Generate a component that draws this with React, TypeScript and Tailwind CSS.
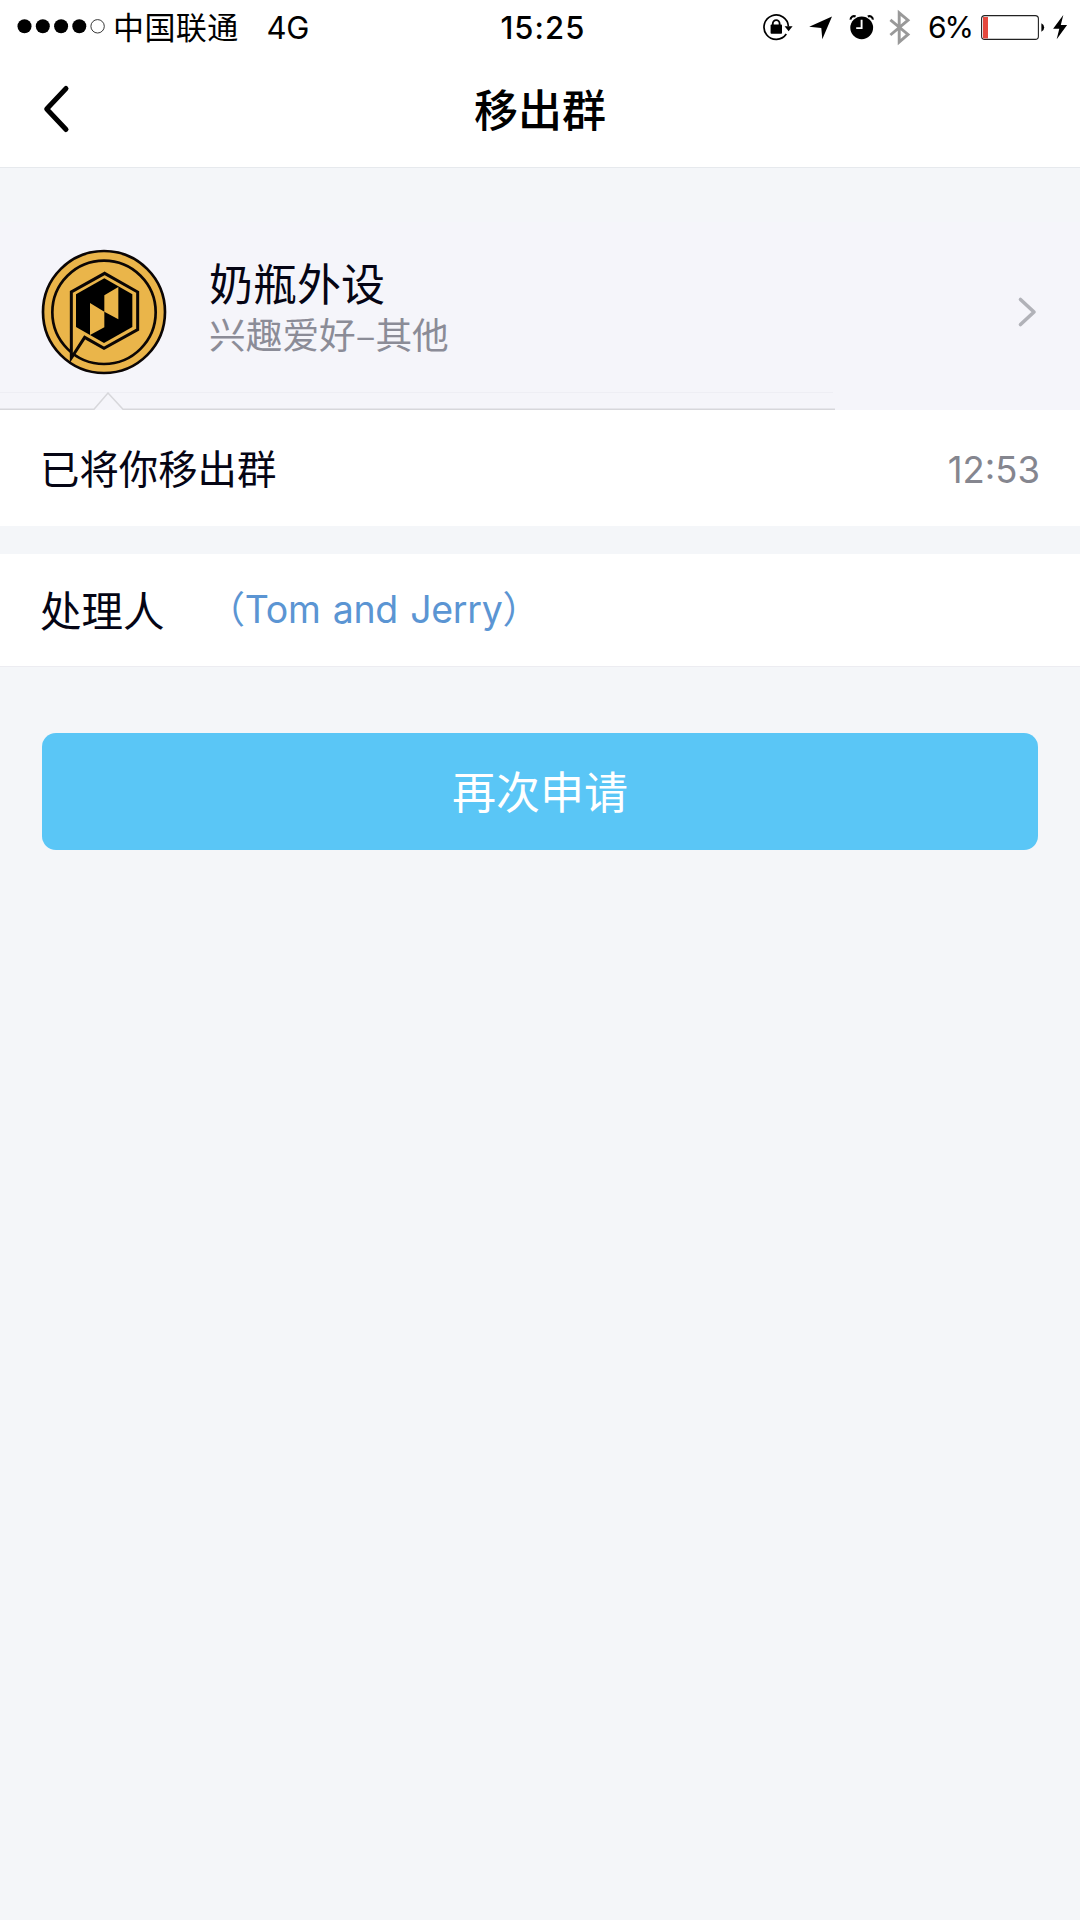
const latin = 'font-[Inter,"Noto_Sans_CJK_SC",sans-serif]';
const cjk = 'font-["Noto_Sans_CJK_SC",sans-serif]';

function SignalDots() {
  return (
    <svg width="90" height="16" viewBox="0 0 90 16">
      <circle cx="7.5" cy="7.3" r="7" />
      <circle cx="25.8" cy="7.3" r="7" />
      <circle cx="44.1" cy="7.3" r="7" />
      <circle cx="62.3" cy="7.3" r="7" />
      <circle cx="80.6" cy="7.3" r="6.7" fill="none" stroke="#222" strokeWidth="0.9" />
    </svg>
  );
}

function StatusIcons() {
  return (
    <svg width="150" height="40" viewBox="762 6 150 40">
      {/* rotation lock */}
      <path d="M788.4 25.5A12.2 12.2 0 1 0 786.3 33" fill="none" stroke="#000" strokeWidth="1.7" />
      <path d="M784.6 25.3h8l-4 4.9z" />
      <rect x="770.6" y="23.6" width="11.4" height="9.2" rx="0.8" />
      <path d="M772.8 24.4v-1.9a3.4 3.4 0 0 1 6.8 0v1.9" fill="none" stroke="#000" strokeWidth="1.8" />
      {/* location */}
      <path d="M832 15.6L822.3 38.3 821.3 27 809.2 25.8z" />
      {/* alarm */}
      <circle cx="861.7" cy="26.8" r="11.4" />
      <path d="M850.6 18.6a3.4 3.4 0 0 1 5-3.1M872.8 18.6a3.4 3.4 0 0 0-5-3.1" fill="none" stroke="#000" strokeWidth="2.2" />
      <path d="M861.6 18.8v8.3h-5.4" fill="none" stroke="#fff" strokeWidth="1.9" />
      {/* bluetooth */}
      <path d="M890.4 18.8L908 33.4 899.2 41V11.8L908 19.2 890.4 34" fill="none" stroke="#999" strokeWidth="2.9" />
    </svg>
  );
}

function Battery() {
  return (
    <svg width="90" height="30" viewBox="980 11 90 30">
      <rect x="981.6" y="14.6" width="56.8" height="23.8" rx="3.2" fill="#fff" stroke="#222" strokeWidth="1.1" />
      <path d="M983 16h5v21.4h-5z" fill="#e5483d" />
      <path d="M1041.4 22.2q2.8 1.6 2.8 4.3t-2.8 4.3z" />
      <path d="M1063.3 14l-10.2 13.8h6.2l-2.6 10.4 10.4-14.2h-6.3z" />
    </svg>
  );
}

function StatusBar() {
  return (
    <div className={`grid h-[54px] grid-cols-[500px_86px_1fr] items-center text-[30px] leading-none ${latin}`}>
      <div className="flex items-center pl-[17px]">
        <SignalDots />
        <span className="ml-[6px] text-[31px] tracking-[0.4px]">中国联通</span>
        <span className="ml-[28px] text-[31px] tracking-[-0.3px]">4G</span>
      </div>
      <div className="text-center text-[31px] font-medium tracking-[1.1px]">15:25</div>
      <div className="flex items-center pl-[176px]">
        <StatusIcons />
        <span className="ml-[16px] w-[52px] whitespace-nowrap tracking-[-2px]">6%</span>
        <Battery />
      </div>
    </div>
  );
}

function GroupAvatar() {
  return (
    <svg className="shrink-0" width="126" height="126" viewBox="64 55 378 378">
      <g fill="#eab54a" stroke="#0b0605" strokeWidth="8">
        <circle cx="253" cy="244" r="183" />
        <circle cx="253" cy="245" r="155" />
      </g>
      <path
        d="M255 128L354 184V297L253 353 195 320 155 382V184z"
        fill="#eab54a"
        stroke="#0b0605"
        strokeWidth="9"
      />
      <path d="M254 143L338 191V289L253 337 169 289V191z" fill="#000" />
      <path d="M211 217L254 243V290L211 313zM254 194L296 169V266L254 243z" fill="#eab54a" />
    </svg>
  );
}

export default function App() {
  return (
    <div className={`flex min-h-[1920px] w-[1080px] flex-col bg-[#f4f6f9] text-black ${cjk}`}>
      <header className="h-[168px] border-b border-[#e6e9ed] bg-white">
        <StatusBar />
        <div className="grid h-[110px] grid-cols-[200px_1fr_200px] items-center">
          <svg className="ml-[42px]" width="30" height="50" viewBox="42 84 30 50">
            <path d="M66 88.5L46.7 109 66 129.5" fill="none" stroke="#000" strokeWidth="5" strokeLinecap="round" strokeLinejoin="round" />
          </svg>
          <h1 className="pb-[3px] text-center text-[44px] leading-none font-medium">移出群</h1>
        </div>
      </header>

      <section className="mt-[54px] flex h-[188px] flex-col bg-[#f5f5fa]">
        <div className="flex h-[170px] items-center pr-[43px] pl-[41px]">
          <div className="pt-[9px]">
            <GroupAvatar />
          </div>
          <div className="ml-[42px] flex-1 pt-px">
            <div className="text-[44px] leading-[51px] text-[#050514]">奶瓶外设</div>
            <div className="text-[36.7px] leading-[51px] text-[#8b8c97]">兴趣爱好–其他</div>
          </div>
          <svg className="mt-[10px]" width="20" height="32" viewBox="1017 296 20 32">
            <path d="M1020.5 299.5L1034 312 1020.5 324.5" fill="none" stroke="#b1b2b8" strokeWidth="3.6" strokeLinecap="round" strokeLinejoin="round" />
          </svg>
        </div>
        <svg width="836" height="18" viewBox="0 392 836 18">
          <path d="M0 392.4H833" stroke="#eeeef3" strokeWidth="1" />
          <path d="M0 409.3H94L108 393 123 409.3H835" fill="none" stroke="#d7d7db" strokeWidth="1.5" />
        </svg>
      </section>

      <section className="flex h-[116px] items-center justify-between bg-white pr-[40px] pl-[40px]">
        <span className="pb-[2px] text-[39.4px] leading-none text-[#050514]">已将你移出群</span>
        <span className={`pt-[4px] text-[36.5px] leading-none text-[#85868f] ${latin}`}>12:53</span>
      </section>

      <section className="mt-7 flex h-[113px] items-center border-b border-[#ececf1] bg-white pl-[40px]">
        <span className="text-[41.5px] leading-none text-[#050514]">处理人</span>
        <span className={`ml-[43px] text-[37.5px] leading-none tracking-[-0.3px] [word-spacing:2px] text-[#5b95d3] ${latin}`}>
          （Tom and Jerry）
        </span>
      </section>

      <button
        type="button"
        className="mx-[42px] mt-[66px] h-[117px] rounded-[14px] bg-[#5ac6f6] pb-[3px] text-[44px] leading-none text-white"
      >
        再次申请
      </button>
    </div>
  );
}
